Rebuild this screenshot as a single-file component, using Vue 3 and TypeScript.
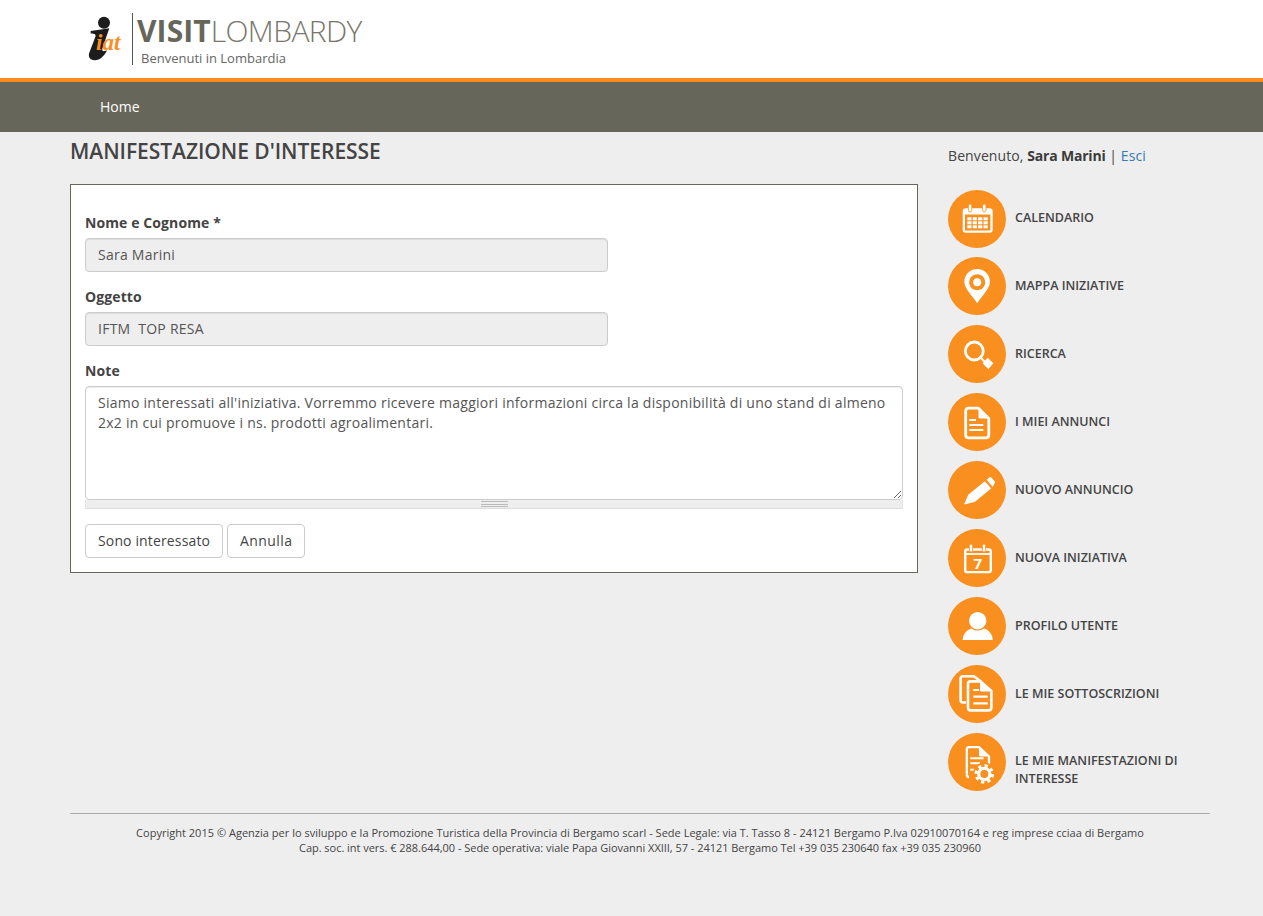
<template>
    <div class="page">
        <header class="top">
            <div class="logo">
                <svg class="logo-mark" width="36" height="48" viewBox="0 0 36 48">
                    <circle cx="16" cy="6.7" r="6" fill="#1c1c1c" />
                    <path d="M2.7 15 L21.3 12.3 L14.5 32 C13.8 34.5 14.5 35.5 16.5 35 L19 34.5 C16 40.5 11.5 44.5 6.5 44.2 C2 44 0 41 1.2 37 L7.5 20.5 C8 18.5 7 17.5 2.7 17.5 Z" fill="#1c1c1c" />
                    <text x="8" y="33.5" class="logo-iat">iat</text>
                </svg>
                <div class="logo-rule"></div>
                <div class="logo-text">
                    <div class="logo-title"><b>VISIT</b><span>LOMBARDY</span></div>
                    <div class="logo-sub">Benvenuti in Lombardia</div>
                </div>
            </div>
        </header>
        <nav class="navbar"><a class="nav-link">Home</a></nav>

        <main class="content">
            <div class="columns">
                <section class="left">
                    <h1 class="title">MANIFESTAZIONE D'INTERESSE</h1>
                    <form class="box" @submit.prevent>
                        <label class="lbl">Nome e Cognome *</label>
                        <input class="field short" value="Sara Marini" disabled />
                        <label class="lbl">Oggetto</label>
                        <input class="field short" value="IFTM  TOP RESA" disabled />
                        <label class="lbl">Note</label>
                        <textarea class="field area" v-model="note"></textarea>
                        <div class="grip"><span></span></div>
                        <div class="buttons">
                            <button class="btn">Sono interessato</button>
                            <button class="btn cancel">Annulla</button>
                        </div>
                    </form>
                </section>

                <aside class="side">
                    <p class="welcome">Benvenuto, <b>Sara Marini</b> | <a>Esci</a></p>
                    <ul class="menu">
                        <li v-for="item in menu" :key="item.icon" class="menu-item">
                            <span class="circle">
                                <svg width="58" height="58" viewBox="0 0 58 58">
                                    <g v-if="item.icon === 'calendar'">
                                        <rect x="14.7" y="18.3" width="30" height="24.4" rx="3" fill="#fff" />
                                        <rect x="17" y="24.5" width="25.4" height="16" fill="#f98f1e" />
                                        <rect x="20.4" y="14" width="3.4" height="8" rx="1.7" fill="#fff" stroke="#f98f1e" stroke-width="0.8" />
                                        <rect x="34.6" y="14" width="3.4" height="8" rx="1.7" fill="#fff" stroke="#f98f1e" stroke-width="0.8" />
                                        <g fill="#fff">
                                            <rect v-for="c in calendarCells" :key="c.k" :x="c.x" :y="c.y" width="4.2" height="3" />
                                        </g>
                                    </g>
                                    <g v-else-if="item.icon === 'pin'">
                                        <path fill-rule="evenodd" fill="#fff" d="M29.2 12 C21.8 12 16.3 17.8 16.3 24.8 C16.3 31.5 24 38.5 29.2 46.3 C34.4 38.5 42 31.5 42 24.8 C42 17.8 36.6 12 29.2 12 Z M29.2 17.3 C33.6 17.3 37.2 20.9 37.2 25.3 C37.2 29.7 33.6 33.3 29.2 33.3 C24.8 33.3 21.2 29.7 21.2 25.3 C21.2 20.9 24.8 17.3 29.2 17.3 Z" />
                                        <circle cx="29.2" cy="25.3" r="4" fill="#fff" />
                                    </g>
                                    <g v-else-if="item.icon === 'search'">
                                        <circle cx="26.3" cy="26" r="9" fill="none" stroke="#fff" stroke-width="2.8" />
                                        <path d="M32.5 32.5 L37 37" stroke="#fff" stroke-width="2" />
                                        <path d="M39.7 32.7 L45.3 38.3 L40.3 44.3 L34.7 38.3 Z" fill="#fff" />
                                    </g>
                                    <g v-else-if="item.icon === 'doc'">
                                        <path d="M20.5 15.2 H30.5 L40.8 25.5 V42 C40.8 43.7 39.7 44.8 38 44.8 H20.5 C18.8 44.8 17.7 43.7 17.7 42 V18 C17.7 16.3 18.8 15.2 20.5 15.2 Z" fill="none" stroke="#fff" stroke-width="2.8" stroke-linejoin="round" />
                                        <path d="M30.5 14.5 L41.5 25.5 H32.5 C31 25.5 30.5 25 30.5 23.5 Z" fill="#fff" />
                                        <path d="M21.3 27 H28 M21.3 32 H35.3 M21.3 37 H35.3" stroke="#fff" stroke-width="2.2" />
                                    </g>
                                    <g v-else-if="item.icon === 'pencil'">
                                        <path d="M16 43.5 L20.2 33.8 L36.8 20.3 L43.2 27.6 L26.6 41 Z" fill="#fff" />
                                        <path d="M38.6 18.8 L41.2 16.5 C42 15.9 42.9 16 43.5 16.7 L46.6 20.2 C47.2 20.9 47.1 21.8 46.4 22.4 L44.8 26 Z" fill="#fff" />
                                    </g>
                                    <g v-else-if="item.icon === 'cal7'">
                                        <rect x="17.2" y="20.5" width="25.6" height="22.6" rx="2.2" fill="none" stroke="#fff" stroke-width="2.4" />
                                        <path d="M17.2 25 H42.8" stroke="#fff" stroke-width="1.8" />
                                        <rect x="21.4" y="15" width="3.2" height="8" rx="1.6" fill="#fff" stroke="#f98f1e" stroke-width="0.8" />
                                        <rect x="34.4" y="15" width="3.2" height="8" rx="1.6" fill="#fff" stroke="#f98f1e" stroke-width="0.8" />
                                        <text x="29.7" y="39.6" class="seven">7</text>
                                    </g>
                                    <g v-else-if="item.icon === 'user'">
                                        <path d="M14.7 43 C14.7 37.5 18 33.5 23.5 31.5 C26.5 34 33 34 36 31.5 C41.5 33.5 44.7 37.5 44.7 43 Z" fill="#fff" />
                                        <circle cx="29.7" cy="23.7" r="9.4" fill="#f98f1e" />
                                        <circle cx="29.7" cy="23.7" r="8.7" fill="#fff" />
                                    </g>
                                    <g v-else-if="item.icon === 'docs'">
                                        <path d="M18 37.5 H15 C13.5 37.5 12.6 36.6 12.6 35 V13.8 C12.6 12.2 13.5 11.3 15 11.3 H26 L33 16.5" fill="none" stroke="#fff" stroke-width="2.6" stroke-linejoin="round" />
                                        <path d="M22.5 16.4 H32.5 L43.4 26 V42.5 C43.4 44.4 42.4 45.4 40.5 45.4 H22.5 C20.8 45.4 20 44.4 20 42.5 V19 C20 17.3 20.8 16.4 22.5 16.4 Z" fill="#f98f1e" stroke="#fff" stroke-width="2.6" stroke-linejoin="round" />
                                        <path d="M32.5 16.4 V26 H43.4" fill="#fff" stroke="#fff" stroke-width="1" />
                                        <path d="M25.3 25 H31 M25.3 31.7 H39.7 M25.3 38.3 H39.7" stroke="#fff" stroke-width="2.2" />
                                    </g>
                                    <g v-else>
                                        <path d="M21 44 C19.6 44 18.8 43 18.8 41.5 V16.5 C18.8 15 19.6 14.2 21 14.2 H31 L41 23.5 V33" fill="none" stroke="#fff" stroke-width="2.3" stroke-linejoin="round" />
                                        <path d="M31 14.2 L41 23.5 H33 C31.6 23.5 31 23 31 21.5 Z" fill="#fff" />
                                        <path d="M22.3 25.3 H35.5 M22.3 30.3 H32 M22.3 36.7 H26.5" stroke="#fff" stroke-width="2" />
                                        <circle cx="36.3" cy="41" r="11.4" fill="#f98f1e" />
                                        <circle cx="36.3" cy="41" r="5.6" fill="none" stroke="#fff" stroke-width="3.2" />
                                        <circle cx="36.3" cy="41" r="8.2" fill="none" stroke="#fff" stroke-width="3" stroke-dasharray="3.2 3.24" />
                                    </g>
                                </svg>
                            </span>
                            <span class="menu-label">{{ item.label }}</span>
                        </li>
                    </ul>
                </aside>
            </div>

            <footer class="foot">
                <p>Copyright 2015 © Agenzia per lo sviluppo e la Promozione Turistica della Provincia di Bergamo scarl - Sede Legale: via T. Tasso 8 - 24121 Bergamo P.Iva 02910070164 e reg imprese cciaa di Bergamo</p>
                <p class="foot-second">Cap. soc. int vers. € 288.644,00 - Sede operativa: viale Papa Giovanni XXIII, 57 - 24121 Bergamo Tel +39 035 230640 fax +39 035 230960</p>
            </footer>
        </main>
    </div>
</template>

<script setup lang="ts">
import { ref } from 'vue';

const note = ref(
    "Siamo interessati all'iniziativa. Vorremmo ricevere maggiori informazioni circa la disponibilità di uno stand di almeno 2x2 in cui promuove i ns. prodotti agroalimentari."
);

const menu = [
    { icon: 'calendar', label: 'CALENDARIO' },
    { icon: 'pin', label: 'MAPPA INIZIATIVE' },
    { icon: 'search', label: 'RICERCA' },
    { icon: 'doc', label: 'I MIEI ANNUNCI' },
    { icon: 'pencil', label: 'NUOVO ANNUNCIO' },
    { icon: 'cal7', label: 'NUOVA INIZIATIVA' },
    { icon: 'user', label: 'PROFILO UTENTE' },
    { icon: 'docs', label: 'LE MIE SOTTOSCRIZIONI' },
    { icon: 'gear', label: 'LE MIE MANIFESTAZIONI DI INTERESSE' },
];

const calendarCells: { k: string; x: number; y: number }[] = [];
for (let r = 0; r < 3; r++) {
    for (let c = 0; c < 4; c++) {
        calendarCells.push({ k: `${r}-${c}`, x: 19.3 + c * 5.4, y: 27.3 + r * 4 });
    }
}
</script>

<style>
html,
body {
    margin: 0;
    background: #eeeeee;
}
</style>

<style scoped>
.page {
    min-height: 916px;
    font-family: "Open Sans", "Liberation Sans", sans-serif;
    font-size: 14px;
    color: #444;
    background: #eeeeee;
}

.top {
    height: 78px;
    background: #fff;
    border-bottom: 4px solid #f98a1b;
}

.logo {
    display: flex;
    padding: 13px 0 0 88px;
}

.logo-mark {
    margin-top: 3px;
    overflow: visible;
}

.logo-iat {
    font-family: "Liberation Serif", serif;
    font-size: 23px;
    font-weight: bold;
    font-style: italic;
    fill: #f98f1e;
}

.seven {
    font-family: "Open Sans", sans-serif;
    font-size: 15px;
    font-weight: 700;
    text-anchor: middle;
    fill: #fff;
}

.logo-rule {
    width: 1px;
    height: 52px;
    margin-left: 8px;
    background: #555;
}

.logo-text {
    padding-left: 4px;
}

.logo-title {
    font-size: 30px;
    line-height: 36px;
    letter-spacing: -0.35px;
    color: #67665a;
}

.logo-title b {
    font-weight: 700;
    letter-spacing: 0.1px;
}

.logo-title span {
    font-weight: 300;
    letter-spacing: -0.6px;
    color: #77766b;
}

.logo-sub {
    padding-left: 4px;
    padding-top: 1px;
    font-size: 13px;
    line-height: 17px;
    color: #666;
}

.navbar {
    display: flex;
    align-items: center;
    box-sizing: border-box;
    height: 50px;
    padding-left: 100px;
    padding-bottom: 2px;
    background: #67665a;
}

.nav-link {
    color: #fff;
    font-size: 14px;
}

.content {
    width: 1140px;
    margin-left: 70px;
}

.columns {
    display: flex;
}

.left {
    width: 848px;
}

.title {
    margin: 0;
    padding-top: 6px;
    font-size: 21px;
    line-height: 26px;
    font-weight: 600;
    letter-spacing: -0.04px;
    color: #444;
}

.box {
    display: flex;
    flex-direction: column;
    align-items: flex-start;
    margin-top: 20px;
    padding: 28px 14px 14px;
    background: #fff;
    border: 1px solid #67665a;
}

.lbl {
    margin-bottom: 5px;
    font-weight: 700;
    line-height: 20px;
    letter-spacing: 0.1px;
}

.field {
    box-sizing: border-box;
    padding: 6px 12px;
    font-family: inherit;
    font-size: 14px;
    line-height: 20px;
    letter-spacing: 0.255px;
    color: #555;
    border: 1px solid #ccc;
    border-radius: 4px;
    box-shadow: inset 0 1px 1px rgba(0, 0, 0, 0.075);
}

.short {
    width: 523px;
    height: 34px;
    padding: 5px 12px 7px;
    margin-bottom: 15px;
    background: #eeeeee;
    white-space: pre;
}

.area {
    display: block;
    width: 818px;
    height: 114px;
    background: #fff;
}

.grip {
    display: flex;
    align-items: center;
    justify-content: center;
    box-sizing: border-box;
    width: 818px;
    height: 9px;
    background: #eeeeee;
    border-bottom: 1px solid #ddd;
    border-right: 1px solid #e4e4e4;
    border-left: 1px solid #e4e4e4;
}

.grip span {
    width: 27px;
    height: 4px;
    border-top: 1px solid #bbb;
    border-bottom: 1px solid #bbb;
    background: linear-gradient(#bbb, #bbb) center / 100% 1px no-repeat;
}

.buttons {
    display: flex;
    gap: 4px;
    margin-top: 15px;
}

.btn {
    height: 34px;
    padding: 6px 12px;
    font-family: inherit;
    font-size: 14px;
    line-height: 20px;
    letter-spacing: 0.14px;
    color: #444;
    background: #fff;
    border: 1px solid #ccc;
    border-radius: 4px;
}

.cancel {
    letter-spacing: 0.4px;
}

.side {
    width: 262px;
    margin-left: 30px;
}

.welcome {
    margin: 0;
    padding-top: 14px;
    line-height: 20px;
    letter-spacing: 0.1px;
    color: #444;
}

.welcome b {
    font-weight: 700;
    letter-spacing: -0.2px;
    color: #3b3b3b;
}

.welcome a {
    color: #337ab7;
}

.menu {
    margin: 0;
    padding: 23.6px 0 0;
    list-style: none;
}

.menu-item {
    display: flex;
    align-items: flex-start;
    height: 58px;
    margin-bottom: 9.9px;
}

.circle {
    flex: none;
    width: 58px;
    height: 58px;
    border-radius: 50%;
    background: #f98f1e;
}

.circle svg {
    display: block;
}

.menu-label {
    margin-left: 9px;
    padding-top: 19.7px;
    font-size: 12.5px;
    font-weight: 600;
    line-height: 18px;
    color: #444;
}

.foot {
    margin-top: 12.5px;
    padding-top: 11px;
    border-top: 1px solid #aaa;
    font-size: 11px;
    line-height: 15px;
    text-align: center;
    color: #444;
}

.foot p {
    margin: 0;
    letter-spacing: 0.015px;
}

.foot .foot-second {
    letter-spacing: -0.03px;
}
</style>
